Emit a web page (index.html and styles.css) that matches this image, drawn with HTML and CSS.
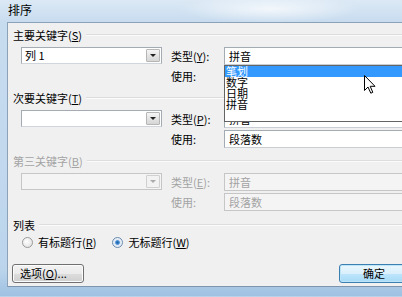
FILE: index.html
```html
<!DOCTYPE html>
<html>

<head>
    <meta charset="utf-8" />
    <title>排序</title>
    <link rel="stylesheet" href="styles.css">
</head>

<body>
    <div class="window">
        <div class="titlebar">排序</div>
        <div class="frame">
            <div class="dialog">
                <div class="group">
                    <div class="legend"><span>主要关键字(<u>S</u>)</span></div>
                    <div class="grid">
                        <div class="combo"><span class="value">列 1</span><span class="drop"></span></div>
                        <span class="label">类型(<u>Y</u>):</span>
                        <div class="field">拼音
                            <div class="listbox">
                                <div class="item selected">笔划</div>
                                <div class="item">数字</div>
                                <div class="item">日期</div>
                                <div class="item">拼音</div>
                            </div>
                        </div>
                        <span></span>
                        <span class="label">使用:</span>
                        <div class="field"></div>
                    </div>
                </div>

                <div class="group">
                    <div class="legend"><span>次要关键字(<u>T</u>)</span></div>
                    <div class="grid">
                        <div class="combo"><span class="value"></span><span class="drop"></span></div>
                        <span class="label">类型(<u>P</u>):</span>
                        <div class="field">拼音</div>
                        <span></span>
                        <span class="label">使用:</span>
                        <div class="field">段落数</div>
                    </div>
                </div>

                <div class="group disabled">
                    <div class="legend"><span>第三关键字(<u>B</u>)</span></div>
                    <div class="grid">
                        <div class="combo"><span class="value"></span><span class="drop"></span></div>
                        <span class="label">类型(<u>E</u>):</span>
                        <div class="field">拼音</div>
                        <span></span>
                        <span class="label">使用:</span>
                        <div class="field">段落数</div>
                    </div>
                </div>

                <div class="legend list-legend"><span>列表</span></div>
                <div class="radios">
                    <label class="radio"><span class="dot"></span><span>有标题行(<u>R</u>)</span></label>
                    <label class="radio checked"><span class="dot"></span><span>无标题行(<u>W</u>)</span></label>
                </div>

                <div class="buttons">
                    <button class="btn">选项(<u>O</u>)...</button>
                    <button class="btn default">确定</button>
                </div>

                <svg class="cursor" width="12" height="19" viewBox="0 0 12 19">
                    <path d="M0.5 0.5 L0.5 15.5 L4 12 L6.8 18.2 L8.8 17.3 L6.2 11.3 L11 11.3 Z" fill="#fff" stroke="#000" stroke-width="1" />
                </svg>
            </div>
        </div>
    </div>
</body>

</html>
```

FILE: styles.css
```css
body {
    margin: 0;
    overflow: hidden;
    width: 402px;
    height: 297px;
    font-family: "Noto Sans CJK SC", "Liberation Sans", sans-serif;
    font-size: 11px;
    color: #000;
}

.window {
    width: 440px;
    height: 297px;
    background: linear-gradient(180deg, #d3e3f2 0%, #c3d8ed 40%, #b9d2ea 100%);
}

.titlebar {
    height: 22px;
    line-height: 19px;
    padding-left: 8px;
    font-size: 12px;
    background:
        radial-gradient(ellipse 90px 14px at 270px 9px, rgba(255, 255, 255, 0.7), rgba(255, 255, 255, 0)),
        linear-gradient(180deg, #dce9f5 0%, #c8dcef 100%);
}

.frame {
    padding: 0 0 9px 7px;
    background: linear-gradient(180deg, #c8dcef 0%, #bcd5ec 90%, #9fc1e2 100%);
}

.dialog {
    position: relative;
    height: 265px;
    padding: 5px 0 0 0;
    box-sizing: border-box;
    border: 1px solid #8ca2b8;
    border-bottom-color: #7d95ad;
    background: #f0f0f0;
}

.legend {
    display: flex;
    align-items: center;
    height: 14px;
    line-height: 14px;
    padding-left: 5px;
    margin-bottom: 5px;
}

.legend::after {
    content: "";
    flex: 1;
    height: 1px;
    margin-left: 4px;
    background: #dcdcdc;
    border-bottom: 1px solid #fbfbfb;
}

u {
    text-decoration: underline;
    text-underline-offset: 1px;
}

.group {
    margin-bottom: 6px;
}

.grid {
    display: grid;
    grid-template-columns: 141px 62px 1fr;
    grid-auto-rows: 18px;
    row-gap: 2px;
    padding-left: 13px;
}

.grid .label {
    line-height: 18px;
    padding-left: 9px;
}

.combo {
    display: flex;
    align-items: center;
    height: 17px;
    box-sizing: border-box;
    border: 1px solid #a5abb3;
    border-bottom-color: #d0d5db;
    background: #fff;
    padding-right: 1px;
}

.combo .value {
    flex: 1;
    padding-left: 3px;
    line-height: 15px;
}

.drop {
    position: relative;
    width: 14px;
    height: 13px;
    box-sizing: border-box;
    border: 1px solid #b6b6b6;
    border-radius: 1px;
    background: linear-gradient(180deg, #f6f6f6 0%, #e4e4e4 50%, #d6d6d6 100%);
}

.drop::after {
    content: "";
    position: absolute;
    left: 3px;
    top: 4px;
    border-left: 3px solid transparent;
    border-right: 3px solid transparent;
    border-top: 3px solid #222;
}

.field {
    position: relative;
    height: 18px;
    box-sizing: border-box;
    border: 1px solid #a5abb3;
    border-bottom-color: #c9ced4;
    background: #fff;
    padding-left: 4px;
    line-height: 16px;
}

.listbox {
    position: absolute;
    top: 17px;
    left: -1px;
    right: -1px;
    height: 57px;
    box-sizing: border-box;
    border: 1px solid #646464;
    background: #fff;
    z-index: 2;
}

.item {
    height: 11px;
    line-height: 11px;
    padding-left: 1px;
}

.item.selected {
    background: #3399ff;
    color: #fff;
}

.disabled {
    color: #a3a3a3;
}

.disabled .combo,
.disabled .field {
    background: #f4f4f4;
    border-color: #c6c6c6;
}

.disabled .drop {
    border-color: #d0d0d0;
    background: #f2f2f2;
}

.disabled .drop::after {
    border-top-color: #aaa;
}

.list-legend {
    margin-top: 7px;
    margin-bottom: 3px;
}

.radios {
    display: flex;
    align-items: center;
    gap: 16px;
    height: 14px;
    padding-left: 14px;
}

.radio {
    display: flex;
    align-items: center;
    gap: 5px;
}

.dot {
    width: 11px;
    height: 11px;
    box-sizing: border-box;
    border-radius: 50%;
    border: 1px solid #9a9a9a;
    background: radial-gradient(circle at 40% 40%, #ffffff 0%, #e6e6e6 70%, #d4d4d4 100%);
}

.checked .dot {
    border-color: #6a8bb0;
    background: radial-gradient(circle, #1e5fa6 0%, #3d88cf 28%, #dfe9f4 45%, #f4f4f4 100%);
}

.buttons {
    display: flex;
    justify-content: space-between;
    margin-top: 15px;
    padding-left: 4px;
    padding-right: 30px;
}

.btn {
    width: 72px;
    height: 19px;
    padding: 0 0 0 7px;
    text-align: left;
    font-family: inherit;
    font-size: 11px;
    line-height: 15px;
    color: #000;
    border: 1px solid #707070;
    border-radius: 3px;
    background: linear-gradient(180deg, #f2f2f2 0%, #ebebeb 50%, #dddddd 51%, #cfcfcf 100%);
    box-shadow: inset 0 0 0 1px #fcfcfc;
}

.btn.default {
    width: 70px;
    padding: 0;
    text-align: center;
    border-color: #3c7fb1;
    box-shadow: inset 0 0 0 1px #bde4f7;
    background: linear-gradient(180deg, #eaf6fd 0%, #d9f0fc 50%, #bee6fd 51%, #a7d9f5 100%);
}

.cursor {
    position: absolute;
    left: 356px;
    top: 52px;
    z-index: 3;
}
```
